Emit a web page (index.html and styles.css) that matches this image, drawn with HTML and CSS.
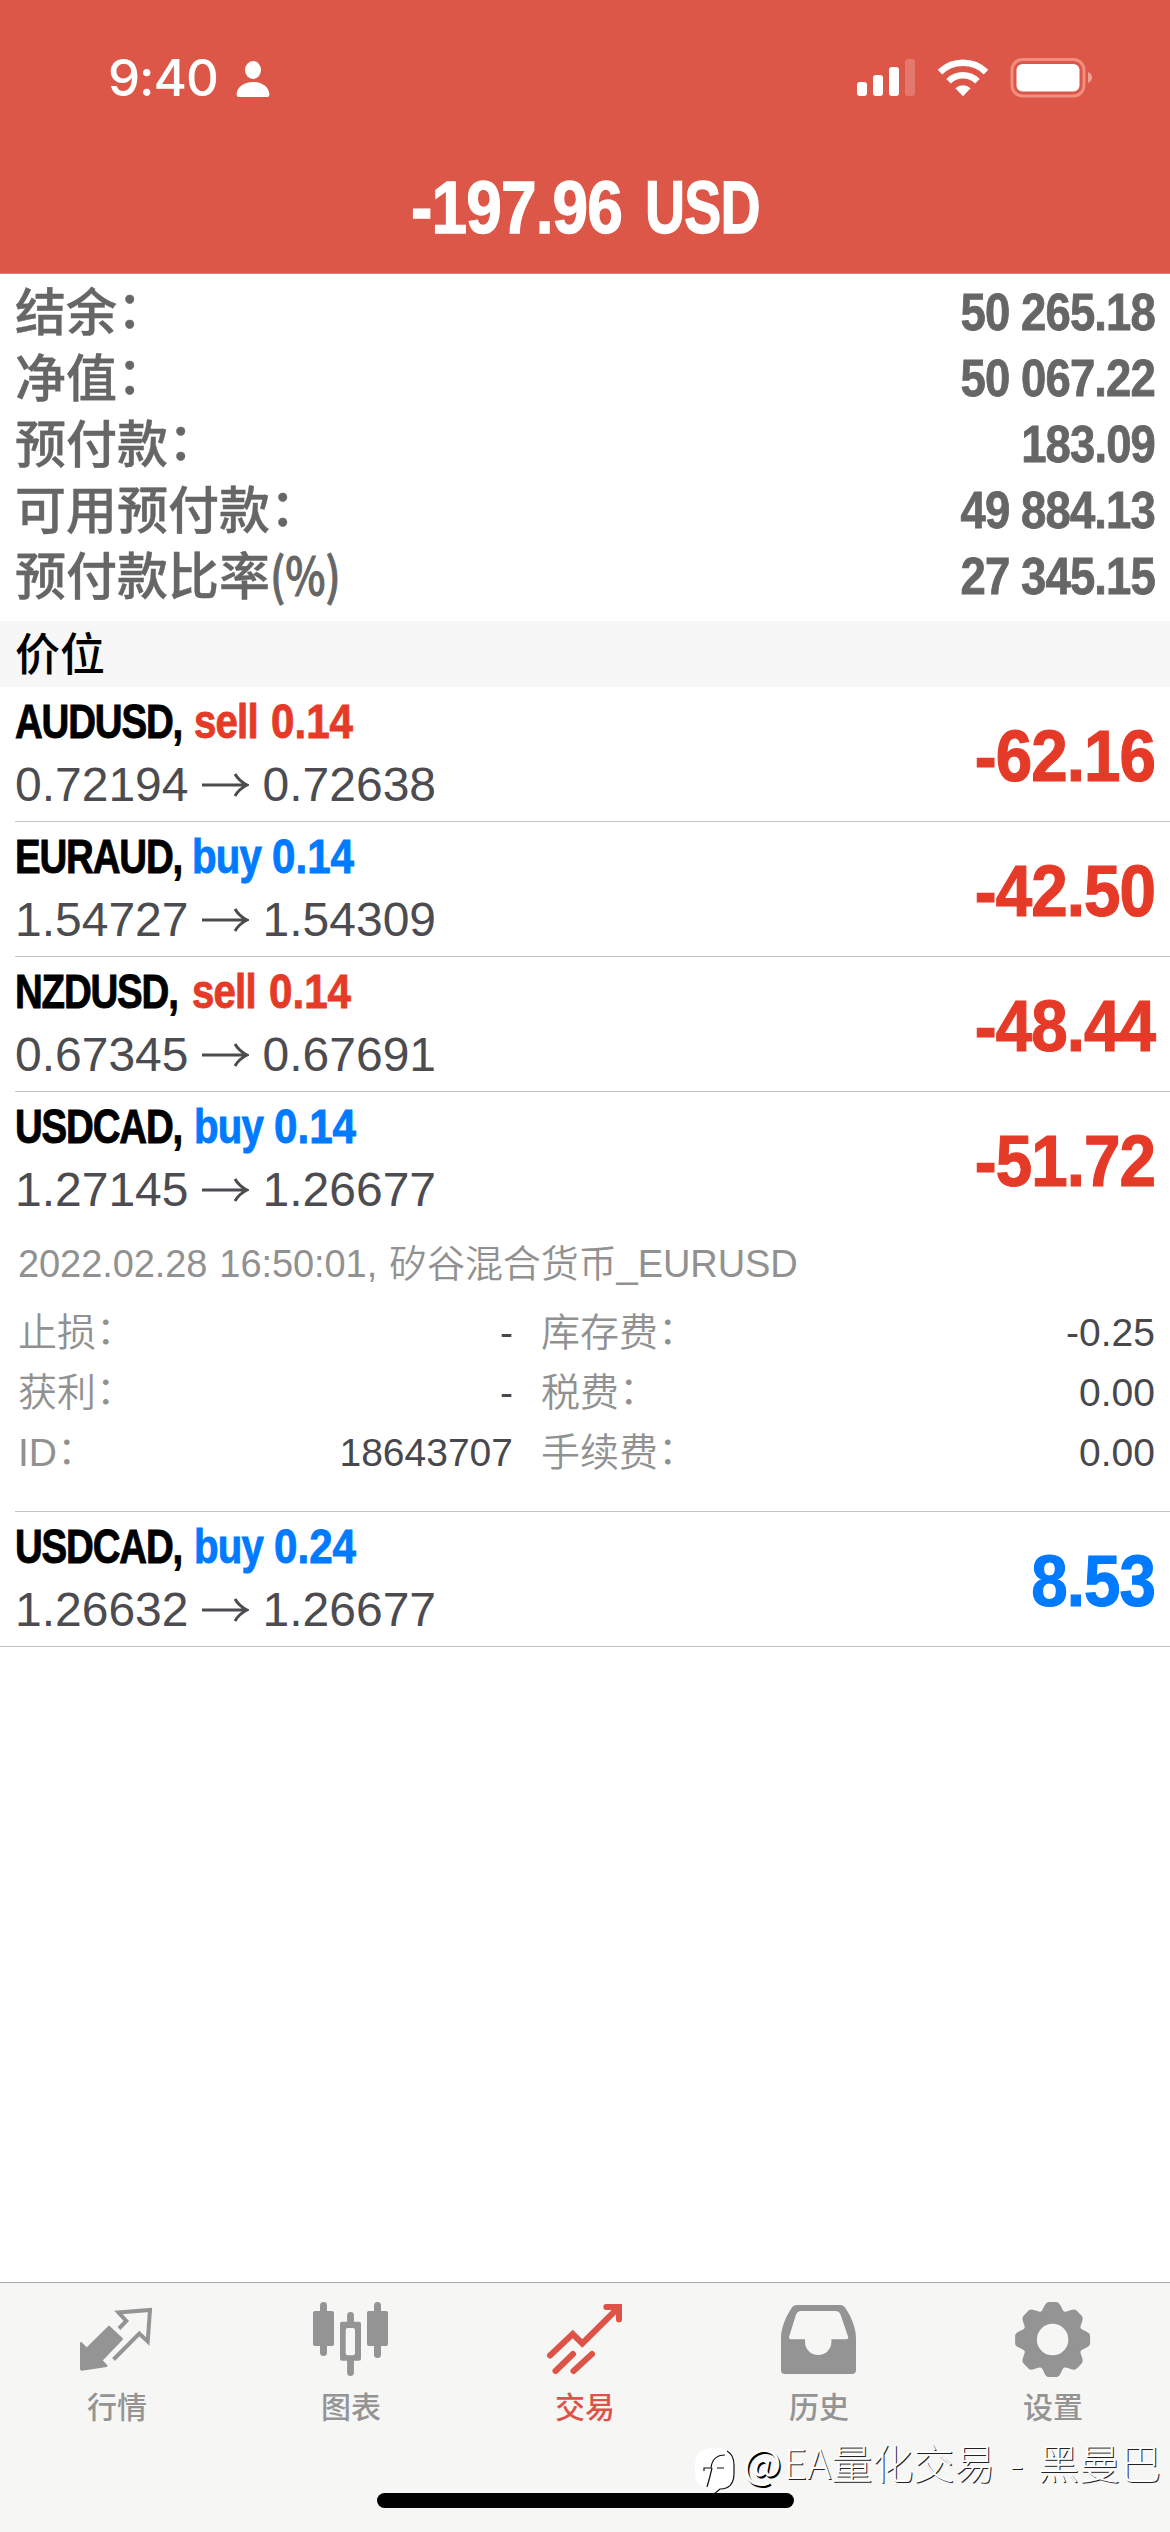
FILE: index.html
```html
<!DOCTYPE html>
<html lang="zh-CN">
<head>
<meta charset="utf-8">
<title>交易</title>
<link rel="stylesheet" href="styles.css">
</head>
<body>
<div class="app">
  <header class="header">
    <div class="status">
      <div class="status-left">
        <span class="time">9:40</span>
        <svg class="person" width="34" height="38" viewBox="0 0 34 38" fill="#fff"><ellipse cx="17" cy="10" rx="8" ry="9"/><path d="M3.500 37C1.500 37 .5 36 .6 34.200C1 27 8 22 17 22S33 27 33.400 34.200C33.500 36 32.500 37 30.500 37Z"/></svg>
      </div>
      <div class="status-right">
        <svg width="59" height="40" viewBox="0 0 59 40" fill="#fff"><rect x="0" y="24" width="10" height="14" rx="3"/><rect x="16" y="17" width="10" height="21" rx="3"/><rect x="32" y="9" width="10" height="29" rx="3"/><rect x="48" y="1" width="10" height="37" rx="3" opacity=".2"/></svg>
        <svg width="52" height="40" viewBox="0 0 52 40" fill="none" stroke="#fff" stroke-width="6.500"><path d="M3 14.200A33 33 0 0 1 49 14.200"/><path d="M11.600 23.200A20.500 20.500 0 0 1 40.400 23.200"/><path d="M26 38.200L18.400 30.200A11 11 0 0 1 33.600 30.200Z" fill="#fff" stroke="none"/></svg>
        <svg width="84" height="40" viewBox="0 0 84 40"><rect x="2" y="1.500" width="72" height="36.500" rx="10.500" fill="none" stroke="#f28e7f" stroke-width="3"/><rect x="6.500" y="6" width="63" height="27.500" rx="6" fill="#fff"/><path d="M78 14C81 15.500 82 17.500 82 19.500S81 23.500 78 25Z" fill="#f0a196"/></svg>
      </div>
    </div>
    <h1 class="title"><span class="title-sum">-197.96</span><span class="title-cur">USD</span></h1>
  </header>

  <section class="account">
    <div class="account-row"><span class="label">结余<i>：</i></span><b class="num">50 265.18</b></div>
    <div class="account-row"><span class="label">净值<i>：</i></span><b class="num">50 067.22</b></div>
    <div class="account-row"><span class="label">预付款<i>：</i></span><b class="num">183.09</b></div>
    <div class="account-row"><span class="label">可用预付款<i>：</i></span><b class="num">49 884.13</b></div>
    <div class="account-row"><span class="label">预付款比率<em class="percent">(%)</em></span><b class="num">27 345.15</b></div>
  </section>

  <h2 class="section">价位</h2>

  <ul class="positions">
    <li class="position">
      <div class="summary">
        <div>
          <div class="name"><span class="symbol">AUDUSD,</span><span class="side sell">sell</span><span class="lots sell">0.14</span></div>
          <div class="prices">0.72194<svg class="arrow" viewBox="0 0 48 28"><path d="M1 14H45M34 3Q38 10 46 14Q38 18 34 25"/></svg>0.72638</div>
        </div>
        <div class="profit sell">-62.16</div>
      </div>
    </li>
    <li class="position">
      <div class="summary">
        <div>
          <div class="name"><span class="symbol symbol-tight">EURAUD,</span><span class="side side-wide buy">buy</span><span class="lots buy">0.14</span></div>
          <div class="prices">1.54727<svg class="arrow" viewBox="0 0 48 28"><path d="M1 14H45M34 3Q38 10 46 14Q38 18 34 25"/></svg>1.54309</div>
        </div>
        <div class="profit sell">-42.50</div>
      </div>
    </li>
    <li class="position">
      <div class="summary">
        <div>
          <div class="name"><span class="symbol symbol-tight">NZDUSD,</span><span class="side sell">sell</span><span class="lots sell">0.14</span></div>
          <div class="prices">0.67345<svg class="arrow" viewBox="0 0 48 28"><path d="M1 14H45M34 3Q38 10 46 14Q38 18 34 25"/></svg>0.67691</div>
        </div>
        <div class="profit sell">-48.44</div>
      </div>
    </li>
    <li class="position">
      <div class="summary">
        <div>
          <div class="name"><span class="symbol">USDCAD,</span><span class="side side-wide buy">buy</span><span class="lots buy">0.14</span></div>
          <div class="prices">1.27145<svg class="arrow" viewBox="0 0 48 28"><path d="M1 14H45M34 3Q38 10 46 14Q38 18 34 25"/></svg>1.26677</div>
        </div>
        <div class="profit sell">-51.72</div>
      </div>
      <div class="details">
        <p class="comment">2022.02.28 16:50:01, 矽谷混合货币_EURUSD</p>
        <dl class="detail-grid">
          <dt>止损<i>：</i></dt><dd>-</dd><dt>库存费<i>：</i></dt><dd>-0.25</dd>
          <dt>获利<i>：</i></dt><dd>-</dd><dt>税费<i>：</i></dt><dd>0.00</dd>
          <dt>ID<i>：</i></dt><dd>18643707</dd><dt>手续费<i>：</i></dt><dd>0.00</dd>
        </dl>
      </div>
    </li>
    <li class="position">
      <div class="summary">
        <div>
          <div class="name"><span class="symbol">USDCAD,</span><span class="side side-wide buy">buy</span><span class="lots buy">0.24</span></div>
          <div class="prices">1.26632<svg class="arrow" viewBox="0 0 48 28"><path d="M1 14H45M34 3Q38 10 46 14Q38 18 34 25"/></svg>1.26677</div>
        </div>
        <div class="profit buy">8.53</div>
      </div>
    </li>
  </ul>

  <footer class="tabbar">
    <nav class="tabs">
      <a class="tab"><svg viewBox="0 0 80 80"><path fill="currentColor" stroke="currentColor" stroke-width="2" stroke-linejoin="round" d="M4 43L9.700 48.600L32 26.600L45 39L24.500 60.300L29.500 66L4.700 69.700L4 69Z"/><path fill="none" stroke="currentColor" stroke-width="4" d="M42 28.500L49.300 21L41.500 12.500L73 10L70.700 41.500L62.300 33.500L36.500 59.500"/></svg>行情</a>
      <a class="tab"><svg viewBox="0 0 80 80" fill="currentColor"><rect x="2" y="11" width="21" height="35" rx="2"/><rect x="9" y="2" width="7" height="54" rx="3.500"/><path fill-rule="evenodd" d="M31 21.700H48Q50 21.700 50 23.700V58.700Q50 60.700 48 60.700H42.900V73Q42.500 76 39.500 76T36.100 73V60.700H31Q29 60.700 29 58.700V23.700Q29 21.700 31 21.700ZM36.700 28Q34.700 28 34.700 30V53.300Q34.700 55.300 36.700 55.300H42Q44 55.300 44 53.300V30Q44 28 42 28Z"/><rect x="36.100" y="12" width="6.800" height="13" rx="3.400"/><rect x="56" y="11" width="21" height="35" rx="2"/><rect x="63" y="2" width="7" height="56" rx="3.500"/></svg>图表</a>
      <a class="tab tab-active"><svg viewBox="0 0 80 80" fill="none" stroke="currentColor" stroke-width="6" stroke-linecap="round"><path d="M5 55.500L27.700 34L37.300 43.500L73 8M10.500 71L28 54M28.500 71L47 54"/><path d="M61.300 7H74V19.500"/><path d="M66 6H75V15Z" fill="currentColor" stroke="none"/></svg>交易</a>
      <a class="tab"><svg viewBox="0 0 80 80"><path fill="currentColor" fill-rule="evenodd" d="M18 5H61Q65 5 67 9C73 18 77 29 77 38V70Q77 74 73 74H6Q2 74 2 70V38C2 29 6 18 12 9Q14 5 18 5ZM22 11Q18.500 11 17 14.500L10.200 36.500Q9.500 39.300 12 39.300H26V42A13.200 13 0 0 0 52.400 42V39.300H67Q70 39.300 69 36.500L61.500 14.500Q60 11 56.500 11Z"/></svg>历史</a>
      <a class="tab"><svg viewBox="0 0 80 80" fill="currentColor"><circle cx="39.600" cy="39.600" r="23" fill="none" stroke="currentColor" stroke-width="14.500"/><g id="teeth"><path d="M26 14C31 11 31 2.200 36 2.100H43.200C48.200 2.200 48.200 11 53.200 14L46 20H33Z"/><path transform="rotate(45 39.600 39.600)" d="M26 14C31 11 31 2.200 36 2.100H43.200C48.200 2.200 48.200 11 53.200 14L46 20H33Z"/><path transform="rotate(90 39.600 39.600)" d="M26 14C31 11 31 2.200 36 2.100H43.200C48.200 2.200 48.200 11 53.200 14L46 20H33Z"/><path transform="rotate(135 39.600 39.600)" d="M26 14C31 11 31 2.200 36 2.100H43.200C48.200 2.200 48.200 11 53.200 14L46 20H33Z"/></g><use href="#teeth" transform="rotate(180 39.600 39.600)"/></svg>设置</a>
    </nav>
    <div class="home"></div>
    <div class="watermark">
      <svg width="42" height="48" viewBox="0 0 42 48"><path fill="#fff" d="M20 1C34 0 40 6 40 18V26C40 37 35 42 26 42L20 46V42C6 42 1 36 1 26V18C1 6 7 1 20 1Z"/><path fill="none" stroke="#111" stroke-width="1.200" d="M33 4Q40 8 40 18V26C40 37 35 42 26 42L20 47M13 40Q16 30 18 21M10 24V21H17C18 12 23 8 31 8M23 21H30"/></svg>
      <span><span class="at">@</span>EA量化交易 - 黑曼巴</span>
    </div>
  </footer>
</div>
</body>
</html>
```
FILE: styles.css
```css
* { box-sizing: border-box; margin: 0; padding: 0; }

body {
  width: 1170px;
  font-family: "Liberation Sans", "Noto Sans CJK SC", sans-serif;
  background: #fff;
  color: #000;
}

i, em { font-style: normal; }

/* Full-width colons sit at the middle of the line */
i { line-height: 0; vertical-align: .05em; }

.app { display: flex; flex-direction: column; height: 2532px; }

/* Header */
.header {
  height: 274px;
  background: #dd5748;
  border-bottom: 1px solid #c98a83;
  color: #fff;
}
.status {
  display: flex;
  justify-content: space-between;
  padding: 58px 76px 0 108px;
  height: 158px;
}
.status-left { display: flex; gap: 16px; height: 40px; }
.time {
  width: 112px;
  font: 550 51px/40px Inter, sans-serif;
  letter-spacing: -1px;
  white-space: nowrap;
}
.person { margin-top: 2px; }
.status-right { display: flex; gap: 21px; height: 40px; }
.title {
  display: flex;
  justify-content: center;
  padding-left: 2px;
  font-size: 74px;
  line-height: 100px;
  white-space: nowrap;
  -webkit-text-stroke: 1.3px currentColor;
}
.title-sum {
  width: 234px;
  letter-spacing: -1px;
  transform: scaleX(.865);
  transform-origin: left;
}
.title-cur {
  width: 116px;
  letter-spacing: -1px;
  transform: scaleX(.75);
  transform-origin: left;
}

/* Account summary */
.account { padding: 6px 15px 11px; height: 347px; color: #666; }
.account-row {
  display: flex;
  justify-content: space-between;
  height: 66px;
  font-size: 51px;
  font-weight: 500;
  line-height: 66px;
}
.label { line-height: 68px; -webkit-text-stroke: .4px currentColor; }
.percent {
  display: inline-block;
  font-family: "Noto Sans CJK SC", sans-serif;
  line-height: 0;
  transform: scaleX(.84);
  transform-origin: left;
  -webkit-text-stroke: 1px currentColor;
}
.num {
  letter-spacing: -1px;
  transform: scaleX(.892);
  transform-origin: right;
  -webkit-text-stroke: .8px currentColor;
}

.section {
  height: 66px;
  padding-left: 15px;
  background: #f7f7f7;
  font: 500 45px/62px "Noto Sans CJK SC", sans-serif;
}

/* Positions */
.positions { flex: 1; list-style: none; }
.position { margin-left: 15px; border-bottom: 1px solid #c4c4c6; }
.position:last-child { margin-left: 0; padding-left: 15px; }
.summary {
  display: flex;
  justify-content: space-between;
  height: 134px;
  padding: 3px 15px 0 0;
}
.name {
  display: flex;
  font-size: 49px;
  font-weight: 700;
  line-height: 62px;
  white-space: nowrap;
  -webkit-text-stroke: .9px currentColor;
}
.name span { transform-origin: left; }
.symbol { width: 179px; letter-spacing: -1.500px; transform: scaleX(.785); }
.symbol-tight { width: 177px; }
.side { width: 77px; letter-spacing: -1px; transform: scaleX(.82); }
.side-wide { width: 80px; }
.lots { transform: scaleX(.86); }
.sell { color: #e63a28; }
.buy { color: #007aff; }
.prices {
  display: flex;
  align-items: center;
  color: #4c4c50;
  font-size: 48px;
  line-height: 66px;
}
.arrow {
  width: 48px;
  height: 28px;
  margin: 0 14px 0 12px;
  fill: none;
  stroke: #4c4c50;
  stroke-width: 3;
}
.profit {
  font-size: 72px;
  font-weight: 700;
  line-height: 132px;
  letter-spacing: -1px;
  transform: scaleX(.91);
  transform-origin: right;
  -webkit-text-stroke: 1.2px currentColor;
}

.details { padding: 8px 15px 29px 3px; height: 285px; color: #919191; }
.comment {
  margin-bottom: 9px;
  font-size: 38px;
  font-weight: 350;
  line-height: 60px;
  letter-spacing: -.08px;
  word-spacing: 1.500px;
}
.detail-grid {
  display: grid;
  grid-template-columns: 120px 375px 160px 1fr;
  font-size: 39px;
  line-height: 60px;
}
.detail-grid dt { font-weight: 350; white-space: nowrap; }
.detail-grid dt:nth-of-type(even) { padding-left: 28px; }
.detail-grid dd { color: #48484c; text-align: right; }

/* Tab bar */
.tabbar {
  position: relative;
  height: 250px;
  background: #f6f6f5;
  border-top: 1px solid #a9a9ab;
}
.tabs { display: grid; grid-template-columns: repeat(5, 1fr); height: 210px; }
.tab {
  display: flex;
  flex-direction: column;
  align-items: center;
  padding-top: 17px;
  color: #949494;
  font: 500 30px/50px "Noto Sans CJK SC", sans-serif;
}
.tab svg { width: 80px; height: 80px; }
.tab-active { color: #dd5348; }
.home {
  width: 417px;
  height: 15px;
  margin: 4px auto 0;
  margin: 0 auto;
  border-radius: 8px;
  background: #000;
}
.watermark {
  position: absolute;
  top: 164px;
  right: 9px;
  display: flex;
  gap: 7px;
  color: #fdfdfd;
  font: 300 41px/28px "Noto Sans CJK SC", sans-serif;
  text-shadow: 1px 1px 0 #222;
  white-space: nowrap;
  word-spacing: 5.500px;
}
.at { margin-right: 2px; font-weight: 400; text-shadow: 1.500px 1.500px 0 #000; }
```
